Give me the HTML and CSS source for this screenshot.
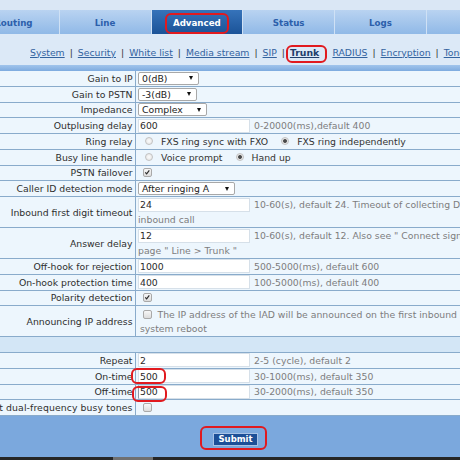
FILE: index.html
```html
<!DOCTYPE html>
<html>
<head>
<meta charset="utf-8">
<title>Advanced - Trunk</title>
<link rel="stylesheet" href="styles.css">
</head>
<body>
<div class="viewport">
  <div class="frame">
    <div class="topstrip"></div>
    <nav class="tabs">
      <span class="tab">Routing</span>
      <span class="tab">Line</span>
      <span class="tab active">Advanced</span>
      <span class="tab">Status</span>
      <span class="tab">Logs</span>
      <span class="tab"></span>
    </nav>
    <div class="subnav">
      <a>System</a><span class="sep">|</span><a>Security</a><span class="sep">|</span><a>White list</a><span class="sep">|</span><a>Media stream</a><span class="sep">|</span><a>SIP</a><span class="sep">|</span><a class="cur">Trunk</a><span class="sep">|</span><a>RADIUS</a><span class="sep">|</span><a>Encryption</a><span class="sep">|</span><a>Tone</a>
    </div>
    <div class="bar"></div>

    <div class="form">
      <div class="row"><div class="lbl">Gain to IP</div><div class="val"><span class="select w61"><span>0(dB)</span><i class="arrow"></i></span></div></div>
      <div class="row"><div class="lbl">Gain to PSTN</div><div class="val"><span class="select w59"><span>-3(dB)</span><i class="arrow"></i></span></div></div>
      <div class="row"><div class="lbl">Impedance</div><div class="val"><span class="select w69"><span>Complex</span><i class="arrow"></i></span></div></div>
      <div class="row"><div class="lbl">Outplusing delay</div><div class="val"><span class="input">600</span><span class="hint">0-20000(ms),default 400</span></div></div>
      <div class="row"><div class="lbl">Ring relay</div><div class="val"><span class="opt"><i class="radio"></i>FXS ring sync with FXO</span><span class="opt"><i class="radio on"></i>FXS ring independently</span></div></div>
      <div class="row"><div class="lbl">Busy line handle</div><div class="val"><span class="opt"><i class="radio"></i>Voice prompt</span><span class="opt"><i class="radio on"></i>Hand up</span></div></div>
      <div class="row"><div class="lbl">PSTN failover</div><div class="val"><span class="check"><svg viewBox="0 0 9 9" width="7" height="7"><path d="M1.6 4.4 L3.4 6.3 L6.8 1.8" fill="none" stroke="#2b2b2b" stroke-width="1.5"/></svg></span></div></div>
      <div class="row"><div class="lbl">Caller ID detection mode</div><div class="val"><span class="select w97"><span>After ringing A</span><i class="arrow"></i></span></div></div>
      <div class="row tall"><div class="lbl">Inbound first digit timeout</div><div class="val"><div class="line"><span class="input">24</span><span class="hint">10-60(s), default 24. Timeout of collecting DTMF digits for the</span></div><div class="line hint flush">inbound call</div></div></div>
      <div class="row tall"><div class="lbl">Answer delay</div><div class="val"><div class="line"><span class="input">12</span><span class="hint">10-60(s), default 12. Also see " Connect signal " on the</span></div><div class="line hint flush">page " Line &gt; Trunk "</div></div></div>
      <div class="row"><div class="lbl">Off-hook for rejection</div><div class="val"><span class="input">1000</span><span class="hint">500-5000(ms), default 600</span></div></div>
      <div class="row"><div class="lbl">On-hook protection time</div><div class="val"><span class="input">400</span><span class="hint">100-5000(ms), default 400</span></div></div>
      <div class="row"><div class="lbl">Polarity detection</div><div class="val"><span class="check"><svg viewBox="0 0 9 9" width="7" height="7"><path d="M1.6 4.4 L3.4 6.3 L6.8 1.8" fill="none" stroke="#2b2b2b" stroke-width="1.5"/></svg></span></div></div>
      <div class="row tall"><div class="lbl">Announcing IP address</div><div class="val"><div class="line"><span class="check ann"></span><span class="hint">The IP address of the IAD will be announced on the first inbound call after</span></div><div class="line hint flush2">system reboot</div></div></div>
      <div class="row section"></div>
      <div class="row"><div class="lbl">Repeat</div><div class="val"><span class="input">2</span><span class="hint">2-5 (cycle), default 2</span></div></div>
      <div class="row"><div class="lbl">On-time</div><div class="val"><span class="input">500</span><span class="hint">30-1000(ms), default 350</span></div></div>
      <div class="row"><div class="lbl">Off-time</div><div class="val"><span class="input focus">500</span><span class="hint">30-2000(ms), default 350</span></div></div>
      <div class="row"><div class="lbl last">Detect dual-frequency busy tones</div><div class="val"><span class="check"></span></div></div>
    </div>

    <div class="footer"><button class="submit">Submit</button></div>
  </div>
  <div class="scrollbar"><div class="thumb"></div></div>

  <div class="mark mark-adv"></div>
  <div class="mark mark-trunk"></div>
  <div class="mark mark-on"></div>
  <div class="mark mark-off"></div>
  <div class="mark mark-submit"></div>
</div>
</body>
</html>
```

FILE: styles.css
```css
html, body {
  margin: 0;
  padding: 0;
}
body {
  font-family: "DejaVu Sans", Verdana, sans-serif;
  font-size: 9.3px;
  color: #333;
  background: #dce8f6;
}
.viewport {
  position: relative;
  width: 460px;
  height: 460px;
  overflow: hidden;
}
.frame {
  width: 625px;
  margin-left: -77px;
}
.topstrip {
  height: 10px;
  background: #dae7f5;
}
.tabs {
  display: flex;
  height: 24px;
  padding-left: 45px;
  background: #dae7f5;
}
.tab {
  width: 91.75px;
  flex: none;
  box-sizing: border-box;
  display: flex;
  align-items: center;
  justify-content: center;
  padding-top: 1px;
  font-weight: bold;
  font-size: 8.7px;
  color: #2c5fab;
  background: linear-gradient(#b9d3f1, #90b9e7);
  border-right: 1px solid #cfe1f5;
}
.tab.active {
  color: #fff;
  background: linear-gradient(#3673ba, #1b5398);
}
.subnav {
  height: 31px;
  box-sizing: border-box;
  padding: 12.5px 0 0 107px;
  line-height: 12px;
  background: #dce9f7;
  white-space: nowrap;
}
.subnav a {
  color: #33639f;
  text-decoration: underline;
}
.subnav a.cur {
  font-weight: bold;
  color: #1e3d6b;
}
.sep {
  margin: 0 5px;
  color: #333;
}
.bar {
  height: 6px;
  background: linear-gradient(#a0c4ec, #7eabdf);
}
.row {
  display: flex;
  height: 15.75px;
  box-sizing: border-box;
  border-bottom: 1px solid #89abcb;
  background: #edf6fd;
  white-space: nowrap;
}
.row.tall {
  height: 31px;
}
.row.section {
  background: #d3e6f6;
}
.lbl {
  width: 213px;
  flex: none;
  box-sizing: border-box;
  border-right: 1px solid #89abcb;
  display: flex;
  align-items: center;
  justify-content: flex-end;
  padding-right: 2.5px;
  color: #2e2e2e;
}
.lbl.last {
  letter-spacing: 0.1px;
}
.val {
  flex: 1;
  min-width: 0;
  display: flex;
  align-items: center;
  padding-left: 2px;
  overflow: hidden;
}
.row.tall .val {
  flex-direction: column;
  align-items: flex-start;
  justify-content: flex-start;
  padding-top: 0.5px;
}
.line {
  height: 15.5px;
  display: flex;
  align-items: center;
}
.line.hint {
  margin-left: 0;
}
.line.flush2 {
  padding-left: 2px;
}
.select {
  display: inline-flex;
  align-items: center;
  justify-content: space-between;
  height: 13px;
  box-sizing: border-box;
  border: 1px solid #a8a8a8;
  border-radius: 2px;
  background: #fff;
  padding: 0 5px 0 3px;
  color: #222;
}
.w61 { width: 61px; }
.w59 { width: 59px; }
.w69 { width: 69px; }
.w97 { width: 97px; }
.arrow {
  width: 0;
  height: 0;
  border-left: 2.5px solid transparent;
  border-right: 2.5px solid transparent;
  border-top: 4px solid #111;
}
.input {
  display: inline-flex;
  align-items: center;
  flex: none;
  width: 112px;
  height: 14px;
  box-sizing: border-box;
  border: 1px solid #d6e0e9;
  background: #fff;
  padding-left: 1px;
  color: #2a2a2a;
}
.input.focus {
  border-left-color: #8e9aa6;
}
.hint {
  color: #7d7d7d;
  margin-left: 4px;
}
.opt {
  display: inline-flex;
  align-items: center;
  margin-right: 6px;
}
.radio {
  display: inline-block;
  width: 8px;
  height: 8px;
  box-sizing: border-box;
  border-radius: 50%;
  border: 1px solid #c2c2c2;
  background: radial-gradient(circle, #fbfbfb, #e2e2e2);
  margin: 0 8px 0 7px;
}
.radio.on {
  background: radial-gradient(circle, #4a4a4a 0 1.5px, #e6e6e6 2.3px);
}
.check {
  display: inline-flex;
  align-items: center;
  justify-content: center;
  width: 9px;
  height: 9px;
  box-sizing: border-box;
  border: 1px solid #a9a9a9;
  border-radius: 2px;
  background: linear-gradient(#f7f7f7, #dcdcdc);
  margin-left: 5px;
}
.check.ann {
  margin-left: 4.5px;
  margin-right: 2px;
}
.footer {
  height: 41px;
  box-sizing: border-box;
  padding-top: 17px;
  background: #7ba8dd;
  display: flex;
  justify-content: center;
  align-items: flex-start;
}
.submit {
  width: 45px;
  height: 13px;
  padding: 0;
  border: 1px solid #a8c2e6;
  background: #1c4f97;
  color: #fff;
  font-family: "DejaVu Sans", Verdana, sans-serif;
  font-weight: bold;
  font-size: 8.5px;
  line-height: 11px;
}
.scrollbar {
  height: 3px;
  background: #262626;
}
.thumb {
  width: 40px;
  height: 3px;
  margin-left: 113px;
  background: #707070;
}
.mark {
  position: absolute;
  box-sizing: border-box;
  border: 2px solid #e11a1f;
  border-radius: 6px;
}
.mark-adv { left: 165px; top: 13px; width: 64px; height: 21px; }
.mark-trunk { left: 286px; top: 45px; width: 41px; height: 18px; }
.mark-on { left: 131px; top: 368px; width: 35px; height: 16px; }
.mark-off { left: 132px; top: 386px; width: 35px; height: 16px; }
.mark-submit { left: 200px; top: 426px; width: 67px; height: 24px; }
```
